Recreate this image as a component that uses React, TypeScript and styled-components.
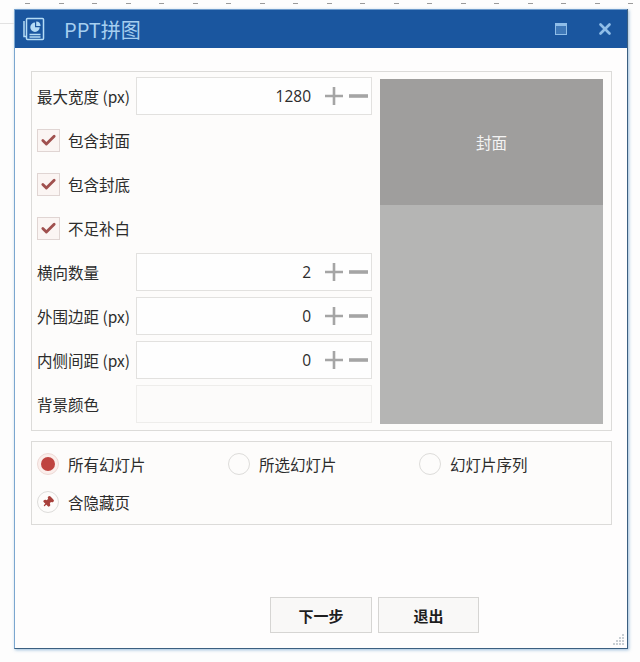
import React from "react";
import styled, { createGlobalStyle } from "styled-components";
import { Check, X, Pin } from "lucide-react";

const GlobalStyle = createGlobalStyle`
  html, body {
    margin: 0;
    padding: 0;
    background: #fdfdfd;
  }
  body {
    font-family: "Noto Sans CJK SC", "Open Sans", sans-serif;
    color: #2c2c2c;
  }
`;

const Page = styled.div`
  width: 640px;
  height: 662px;
  overflow: hidden;
`;

const Ruler = styled.div`
  height: 9px;
  box-sizing: border-box;
  padding: 3px 0 0 25px;
  display: flex;
`;

const Tick = styled.span`
  flex: none;
  width: 33.5px;

  &::before {
    content: "";
    display: block;
    width: 5px;
    height: 1px;
    background: #9b9b9b;
  }
`;

const Window = styled.div`
  width: 614px;
  height: 640px;
  margin-left: 14px;
  box-sizing: border-box;
  display: flex;
  flex-direction: column;
  background: #fefdfd;
  border-right: 1px solid #3c5f80;
  border-bottom: 1px solid #3c5f80;
  border-left: 1px solid #7ba6cf;
  box-shadow: 1px 1px 3px rgba(60, 130, 190, 0.5);
  position: relative;

  &::before {
    content: "";
    position: absolute;
    left: -15px;
    top: 14px;
    width: 14px;
    height: 1px;
    background: #e2e2e2;
  }
`;

const TitleBar = styled.div`
  height: 39px;
  flex: none;
  display: flex;
  align-items: center;
  background: #1a569f;
  border-top: 1px solid #6f9ccc;
  box-sizing: border-box;
  padding: 0 11px 0 6px;
  color: #a9d0f2;
`;

const TitleText = styled.span`
  margin-left: 19px;
  font-size: 20px;
  flex: 1;
  color: #a6cff0;
`;

const WinIcon = styled.button`
  width: 22px;
  height: 22px;
  margin-left: 22px;
  padding: 0;
  border: none;
  background: none;
  display: flex;
  align-items: center;
  justify-content: center;
  color: #8fbde8;
`;

const Body = styled.div`
  flex: 1;
  display: flex;
  flex-direction: column;
  padding: 23px 15px 15px 16px;
`;

const Panel = styled.div`
  border: 1px solid #dcdbd9;
  box-sizing: border-box;
  background: #fdfcfb;
`;

const TopPanel = styled(Panel)`
  height: 360px;
  display: flex;
  padding: 5px 7px 6px 5px;
`;

const Form = styled.div`
  width: 335px;
  display: flex;
  flex-direction: column;
  gap: 6px;
`;

const Row = styled.div`
  height: 38px;
  display: flex;
  align-items: center;
`;

const Label = styled.label`
  width: 99px;
  flex: none;
  font-size: 15.5px;
  white-space: nowrap;
`;

const Field = styled.div<{ $blank?: boolean }>`
  width: 236px;
  height: 38px;
  box-sizing: border-box;
  border: 1px solid ${(p) => (p.$blank ? "#eeedeb" : "#e2e1df")};
  background: ${(p) => (p.$blank ? "#fcfbfa" : "#fefefe")};
  display: flex;
  align-items: center;
  justify-content: flex-end;
  padding-right: 2px;
`;

const Value = styled.span`
  font-family: "Open Sans", sans-serif;
  font-size: 15.5px;
  margin-right: 14px;
`;

const CheckBox = styled.span`
  width: 23px;
  height: 23px;
  box-sizing: border-box;
  margin-right: 8px;
  border: 1px solid #e0d5d3;
  background: #fbf5f3;
  display: flex;
  align-items: center;
  justify-content: center;
  color: #a0504e;
`;

const CheckText = styled.span`
  font-size: 15.5px;
`;

const Preview = styled.div`
  width: 223px;
  margin-left: 8px;
  margin-top: 2px;
  display: flex;
  flex-direction: column;
  background: #b5b5b4;
`;

const Cover = styled.div`
  height: 126px;
  background: #9f9e9d;
  color: #f3f3f3;
  font-size: 15.5px;
  display: flex;
  align-items: center;
  justify-content: center;
`;

const OptionsPanel = styled(Panel)`
  height: 84px;
  margin-top: 10px;
  padding: 9px 0 0 5px;
  display: grid;
  grid-template-columns: 191px 191px 1fr;
  grid-template-rows: 26px 26px;
  row-gap: 12px;
`;

const Option = styled.div`
  display: flex;
  align-items: center;
  font-size: 15.5px;
`;

const Radio = styled.span<{ $on?: boolean }>`
  width: 22px;
  height: 22px;
  box-sizing: border-box;
  margin-right: 9px;
  border-radius: 50%;
  border: 1px solid ${(p) => (p.$on ? "#eedad6" : "#dddcda")};
  background: ${(p) => (p.$on ? "#fbeeeb" : "#fdfcfb")};
  display: flex;
  align-items: center;
  justify-content: center;
  color: #a8413c;
`;

const Dot = styled.span`
  width: 14px;
  height: 14px;
  border-radius: 50%;
  background: #bf4440;
`;

const Footer = styled.div`
  margin-top: auto;
  display: flex;
  gap: 6px;
  padding-left: 239px;
`;

const Button = styled.button<{ $width: number }>`
  width: ${(p) => p.$width}px;
  height: 36px;
  border: 1px solid #d6d5d3;
  background: #f9f8f7;
  font-family: inherit;
  font-size: 15px;
  font-weight: 700;
  color: #1e1e1e;
  padding: 0;
`;

const Grip = styled.svg`
  position: absolute;
  right: 2px;
  bottom: 2px;
`;

const LogoIcon = () => (
  <svg width="24" height="24" viewBox="0 0 24 24" fill="none" stroke="#b5dcf5" strokeWidth="1.5">
    <path d="M3 4v15.5h2" />
    <rect x="5.5" y="1.5" width="17" height="21" rx="1" />
    <path d="M14 5.5a4.7 4.7 0 1 0 4.7 4.7H14z" fill="#b5dcf5" stroke="none" />
    <path d="M15.2 4.4a4.6 4.6 0 0 1 4.4 4.6h-4.4z" fill="#b5dcf5" stroke="none" />
    <path d="M8.5 17.5h11M8.5 20h11" />
  </svg>
);

const MaximizeIcon = () => (
  <svg width="12" height="12" viewBox="0 0 12 12">
    <rect x="0.5" y="0.5" width="11" height="11" fill="#3f78b8" stroke="#8fbde8" />
    <rect x="0" y="0" width="12" height="3" fill="#8fbde8" />
  </svg>
);

const StepButtons = () => (
  <svg width="44" height="20" viewBox="0 0 44 20" fill="none" stroke="#a5a5a5">
    <path d="M0 10h18M9 1v18" strokeWidth="2.6" />
    <path d="M24 10h19" strokeWidth="3.6" />
  </svg>
);

const NumberRow = ({ label, value }: { label: string; value: string }) => (
  <Row>
    <Label>{label}</Label>
    <Field>
      <Value>{value}</Value>
      <StepButtons />
    </Field>
  </Row>
);

const CheckRow = ({ label }: { label: string }) => (
  <Row>
    <CheckBox>
      <Check size={17} strokeWidth={4} />
    </CheckBox>
    <CheckText>{label}</CheckText>
  </Row>
);

const ticks = Array.from({ length: 19 }, (_, i) => i);

export default function App() {
  return (
    <Page>
      <GlobalStyle />
      <Ruler>
        {ticks.map((i) => (
          <Tick key={i} />
        ))}
      </Ruler>
      <Window>
        <TitleBar>
          <LogoIcon />
          <TitleText>PPT拼图</TitleText>
          <WinIcon>
            <MaximizeIcon />
          </WinIcon>
          <WinIcon>
            <X size={18} strokeWidth={3.6} />
          </WinIcon>
        </TitleBar>
        <Body>
          <TopPanel>
            <Form>
              <NumberRow label="最大宽度 (px)" value="1280" />
              <CheckRow label="包含封面" />
              <CheckRow label="包含封底" />
              <CheckRow label="不足补白" />
              <NumberRow label="横向数量" value="2" />
              <NumberRow label="外围边距 (px)" value="0" />
              <NumberRow label="内侧间距 (px)" value="0" />
              <Row>
                <Label>背景颜色</Label>
                <Field $blank />
              </Row>
            </Form>
            <Preview>
              <Cover>封面</Cover>
            </Preview>
          </TopPanel>
          <OptionsPanel>
            <Option>
              <Radio $on>
                <Dot />
              </Radio>
              所有幻灯片
            </Option>
            <Option>
              <Radio />
              所选幻灯片
            </Option>
            <Option>
              <Radio />
              幻灯片序列
            </Option>
            <Option>
              <Radio>
                <Pin size={12} strokeWidth={2.6} fill="#a8413c" style={{ transform: "rotate(45deg)" }} />
              </Radio>
              含隐藏页
            </Option>
          </OptionsPanel>
          <Footer>
            <Button $width={102}>下一步</Button>
            <Button $width={101}>退出</Button>
          </Footer>
        </Body>
        <Grip width="14" height="14" viewBox="0 0 14 14" fill="#c9cfd4">
          <rect x="11" y="2" width="2" height="2" />
          <rect x="8" y="5" width="2" height="2" />
          <rect x="11" y="5" width="2" height="2" />
          <rect x="5" y="8" width="2" height="2" />
          <rect x="8" y="8" width="2" height="2" />
          <rect x="11" y="8" width="2" height="2" />
          <rect x="2" y="11" width="2" height="2" />
          <rect x="5" y="11" width="2" height="2" />
          <rect x="8" y="11" width="2" height="2" />
          <rect x="11" y="11" width="2" height="2" />
        </Grip>
      </Window>
    </Page>
  );
}
